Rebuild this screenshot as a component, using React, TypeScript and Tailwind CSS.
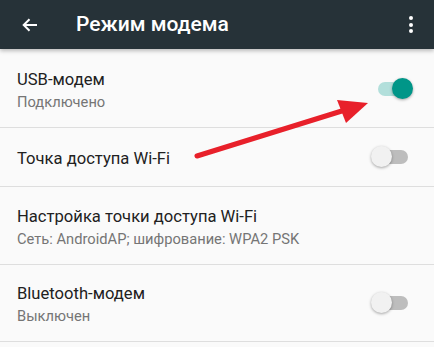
import React from "react";

function Toggle({ on }: { on: boolean }) {
  return (
    <div className="relative w-[42px] h-[22px] shrink-0 -mt-[4px]">
      <div
        className={`absolute left-[7px] top-[4px] w-[30px] h-[14px] rounded-full ${
          on ? "bg-[#b2dfdb]" : "bg-[#bdbdbd]"
        }`}
      />
      <div
        className={`absolute top-0 w-[21px] h-[21px] rounded-full shadow-[0_1px_3px_rgba(0,0,0,0.35)] ${
          on ? "left-[21px] bg-[#009688]" : "left-0 bg-[#f1f1f1]"
        }`}
      />
    </div>
  );
}

function Row({
  title,
  sub,
  toggle,
  h,
  on,
}: {
  title: string;
  sub?: string;
  toggle?: boolean;
  h: string;
  on?: boolean;
}) {
  return (
    <div className={`flex items-center justify-between pl-[17px] pr-[21px] border-b border-[#dedede] ${h}`}>
      <div className="flex flex-col">
        <div className="text-[16.6px] leading-[22px] text-[#212121]">{title}</div>
        {sub && <div className="text-[14.7px] leading-[22px] text-[#757575]">{sub}</div>}
      </div>
      {toggle && <Toggle on={!!on} />}
    </div>
  );
}

export default function App() {
  return (
    <div
      className="relative w-[434px] h-[347px] overflow-hidden bg-[#fafafa]"
      style={{ fontFamily: "Roboto, 'Noto Sans', sans-serif" }}
    >
      <div className="relative z-10 h-[49px] bg-[#263238] flex items-center shadow-[0_2px_4px_rgba(0,0,0,0.25)]">
        <svg width="16" height="14" viewBox="0 0 16 14" className="ml-[22px]">
          <path d="M15 7H2M7.5 1.2L1.7 7l5.8 5.8" stroke="white" strokeWidth="2" fill="none" />
        </svg>
        <div className="ml-[38px] text-[21px] font-medium text-white leading-none">Режим модема</div>
        <div className="ml-auto mr-[21px] flex flex-col gap-[2.5px]">
          <div className="w-[4px] h-[4px] rounded-full bg-white" />
          <div className="w-[4px] h-[4px] rounded-full bg-white" />
          <div className="w-[4px] h-[4px] rounded-full bg-white" />
        </div>
      </div>
      <Row title="USB-модем" sub="Подключено" toggle on h="h-[79px] pt-[6px]" />
      <Row title="Точка доступа Wi-Fi" toggle on={false} h="h-[59px] pt-[3px]" />
      <Row title="Настройка точки доступа Wi-Fi" sub="Сеть: AndroidAP; шифрование: WPA2 PSK" h="h-[78px] pt-[4px]" />
      <Row title="Bluetooth-модем" sub="Выключен" toggle on={false} h="h-[77px] pt-[4px]" />
      <svg className="absolute left-0 top-0 z-20" width="434" height="347" viewBox="0 0 434 347">
        <line x1="197" y1="156" x2="345" y2="110" stroke="#e8202a" strokeWidth="5" strokeLinecap="round" />
        <polygon points="368,103 337,100 346,123" fill="#e8202a" />
      </svg>
    </div>
  );
}
